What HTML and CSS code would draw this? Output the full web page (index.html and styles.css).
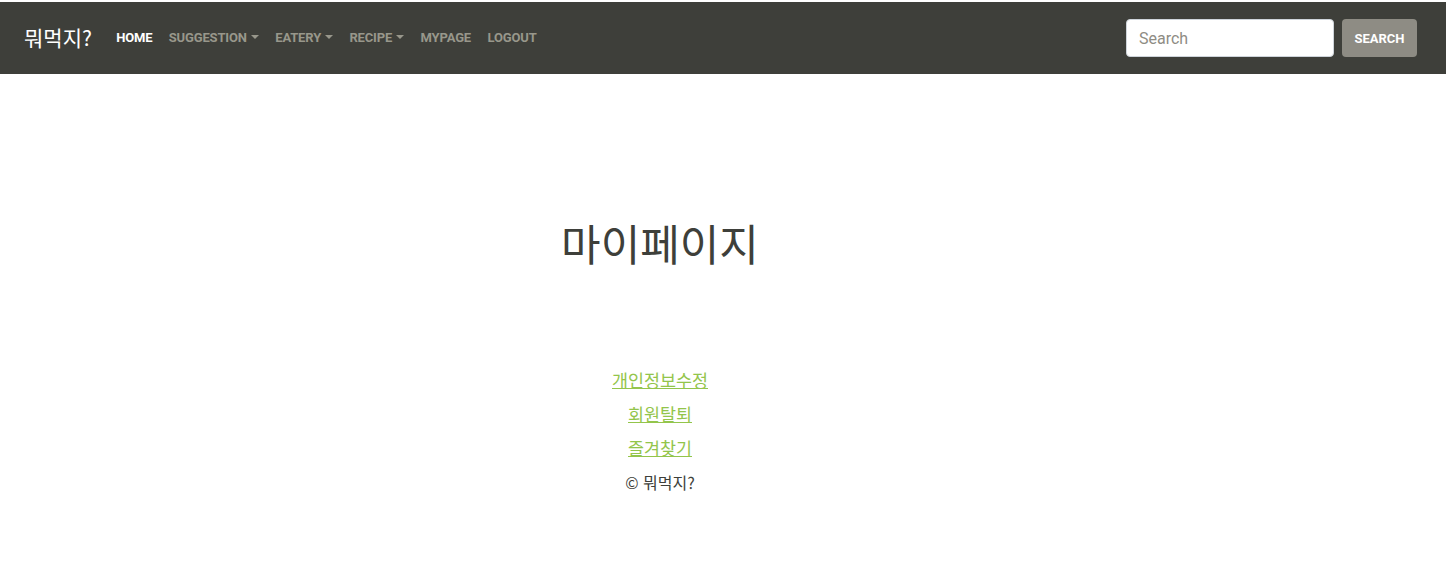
FILE: index.html
```html
<!DOCTYPE html>
<html lang="ko">
<head>
<meta charset="utf-8">
<title>뭐먹지?</title>
<link rel="stylesheet" href="styles.css">
</head>
<body>
<nav class="navbar">
  <a class="brand" href="#">뭐먹지?</a>
  <ul class="nav">
    <li><a class="nav-link active" href="#">Home</a></li>
    <li><a class="nav-link dropdown" href="#">Suggestion</a></li>
    <li><a class="nav-link dropdown" href="#">Eatery</a></li>
    <li><a class="nav-link dropdown" href="#">Recipe</a></li>
    <li><a class="nav-link" href="#">Mypage</a></li>
    <li><a class="nav-link" href="#">Logout</a></li>
  </ul>
  <form class="search">
    <input class="search-input" type="text" placeholder="Search">
    <button class="search-btn" type="button">Search</button>
  </form>
</nav>
<main class="main">
  <h1 class="title">마이페이지</h1>
  <ul class="links">
    <li><a href="#">개인정보수정</a></li>
    <li><a href="#">회원탈퇴</a></li>
    <li><a href="#">즐겨찾기</a></li>
  </ul>
  <p class="copy">© 뭐먹지?</p>
</main>
</body>
</html>
```
FILE: styles.css
```css
* { box-sizing: border-box; }
html, body { margin: 0; padding: 0; }
body {
  font-family: Roboto, "Noto Sans CJK KR", "Liberation Sans", sans-serif;
  font-size: 16px;
  color: #3e3f3a;
  background: #fff;
  padding-top: 2px;
}
.navbar {
  display: flex;
  align-items: center;
  height: 72px;
  background: #3e3f3a;
  padding: 0 29px 0 24px;
}
.brand {
  color: #fff;
  text-decoration: none;
  font-size: 21px;
  margin-right: 16px;
  font-family: "Noto Sans CJK KR", sans-serif;
  line-height: 1;
  position: relative;
  top: -1px;
}
.nav {
  list-style: none;
  margin: 0;
  padding: 0;
  display: flex;
  flex: 1;
  position: relative;
  top: -1px;
}
.nav-link {
  display: block;
  padding: 8px 8.2px;
  font-size: 13px;
  font-weight: 700;
  text-transform: uppercase;
  color: #98978b;
  text-decoration: none;
  letter-spacing: -0.15px;
}
.nav-link.active { color: #fff; }
.dropdown::after {
  content: "";
  display: inline-block;
  margin-left: 4px;
  vertical-align: 3px;
  border-top: 4px solid;
  border-left: 4px solid transparent;
  border-right: 4px solid transparent;
}
.search {
  display: flex;
  gap: 8px;
  margin: 0;
}
.search-input {
  width: 208px;
  height: 38px;
  border: 1px solid #ced4da;
  border-radius: 4px;
  padding: 6px 12px;
  font-family: Roboto, sans-serif;
  font-size: 16px;
  color: #495057;
  background: #fff;
}
.search-input::placeholder { color: #8e8c84; }
.search-btn {
  width: 75px;
  height: 38px;
  border: 0;
  border-radius: 4px;
  background: #8e8c84;
  color: #fff;
  font-family: Roboto, sans-serif;
  font-size: 13px;
  font-weight: 700;
  text-transform: uppercase;
}
.main {
  width: 1320px;
  text-align: center;
  padding-top: 138px;
}
.title {
  margin: 0;
  font-family: "Noto Sans CJK KR", sans-serif;
  font-weight: 400;
  font-size: 43px;
  line-height: 60px;
  color: #3e3f3a;
}
.links {
  list-style: none;
  margin: 91px 0 0;
  padding: 0;
}
.links li {
  line-height: 34px;
  height: 34px;
}
.links a {
  color: #93c54b;
  text-decoration: underline;
  font-family: "Noto Sans CJK KR", sans-serif;
  font-size: 17.4px;
}
.copy {
  margin: 0;
  line-height: 34px;
  font-size: 16px;
  font-family: "Noto Sans CJK KR", sans-serif;
}
```
